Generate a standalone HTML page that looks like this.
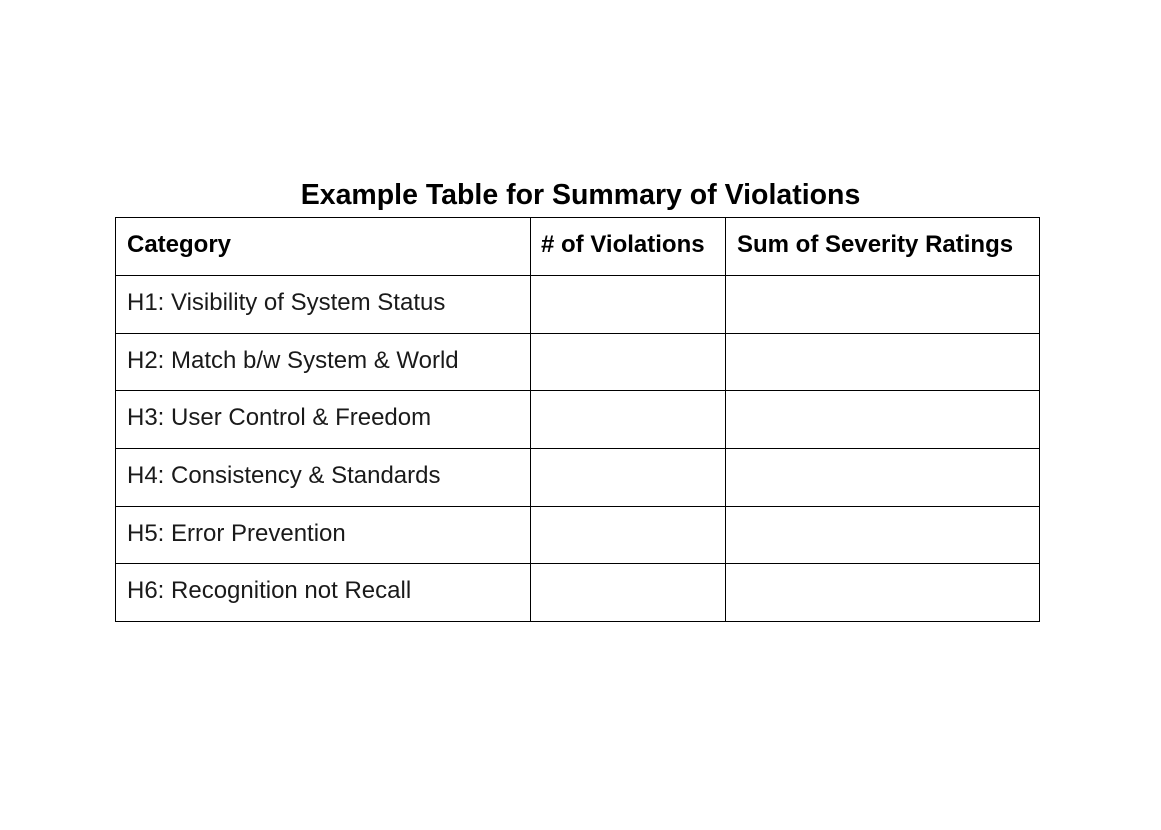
<!DOCTYPE html>
<html><head><meta charset="utf-8"><style>
html,body{margin:0;padding:0;background:#fff;width:1161px;height:830px;overflow:hidden;font-family:"Liberation Sans",Arial,sans-serif;color:#000}
.t{position:absolute;left:0;width:1161px;top:177px;text-align:center;font-weight:bold;font-size:28.5px;line-height:36px}
.h{position:absolute;background:#000;height:1px;left:115px;width:925px}
.v{position:absolute;background:#000;width:1px;top:217px;height:405px}
.c{position:absolute;font-size:24px;line-height:26px;white-space:nowrap;color:#1a1a1a}
.b{font-weight:bold;color:#000}
</style></head><body>
<div class="t">Example Table for Summary of Violations</div>
<div class="h" style="top:217px"></div>
<div class="h" style="top:275px"></div>
<div class="h" style="top:333px"></div>
<div class="h" style="top:390px"></div>
<div class="h" style="top:448px"></div>
<div class="h" style="top:506px"></div>
<div class="h" style="top:563px"></div>
<div class="h" style="top:621px"></div>
<div class="v" style="left:115px"></div>
<div class="v" style="left:530px"></div>
<div class="v" style="left:725px"></div>
<div class="v" style="left:1039px"></div>
<div class="c b" style="left:127px;top:232px">Category</div>
<div class="c b" style="left:541px;top:232px">#&nbsp;of Violations</div>
<div class="c b" style="left:737px;top:232px">Sum of Severity Ratings</div>
<div class="c" style="left:127px;top:290px">H1: Visibility of System Status</div>
<div class="c" style="left:127px;top:348px">H2: Match b/w System &amp; World</div>
<div class="c" style="left:127px;top:405px">H3: User Control &amp; Freedom</div>
<div class="c" style="left:127px;top:463px">H4: Consistency &amp; Standards</div>
<div class="c" style="left:127px;top:521px">H5: Error Prevention</div>
<div class="c" style="left:127px;top:578px">H6: Recognition not Recall</div>
</body></html>
